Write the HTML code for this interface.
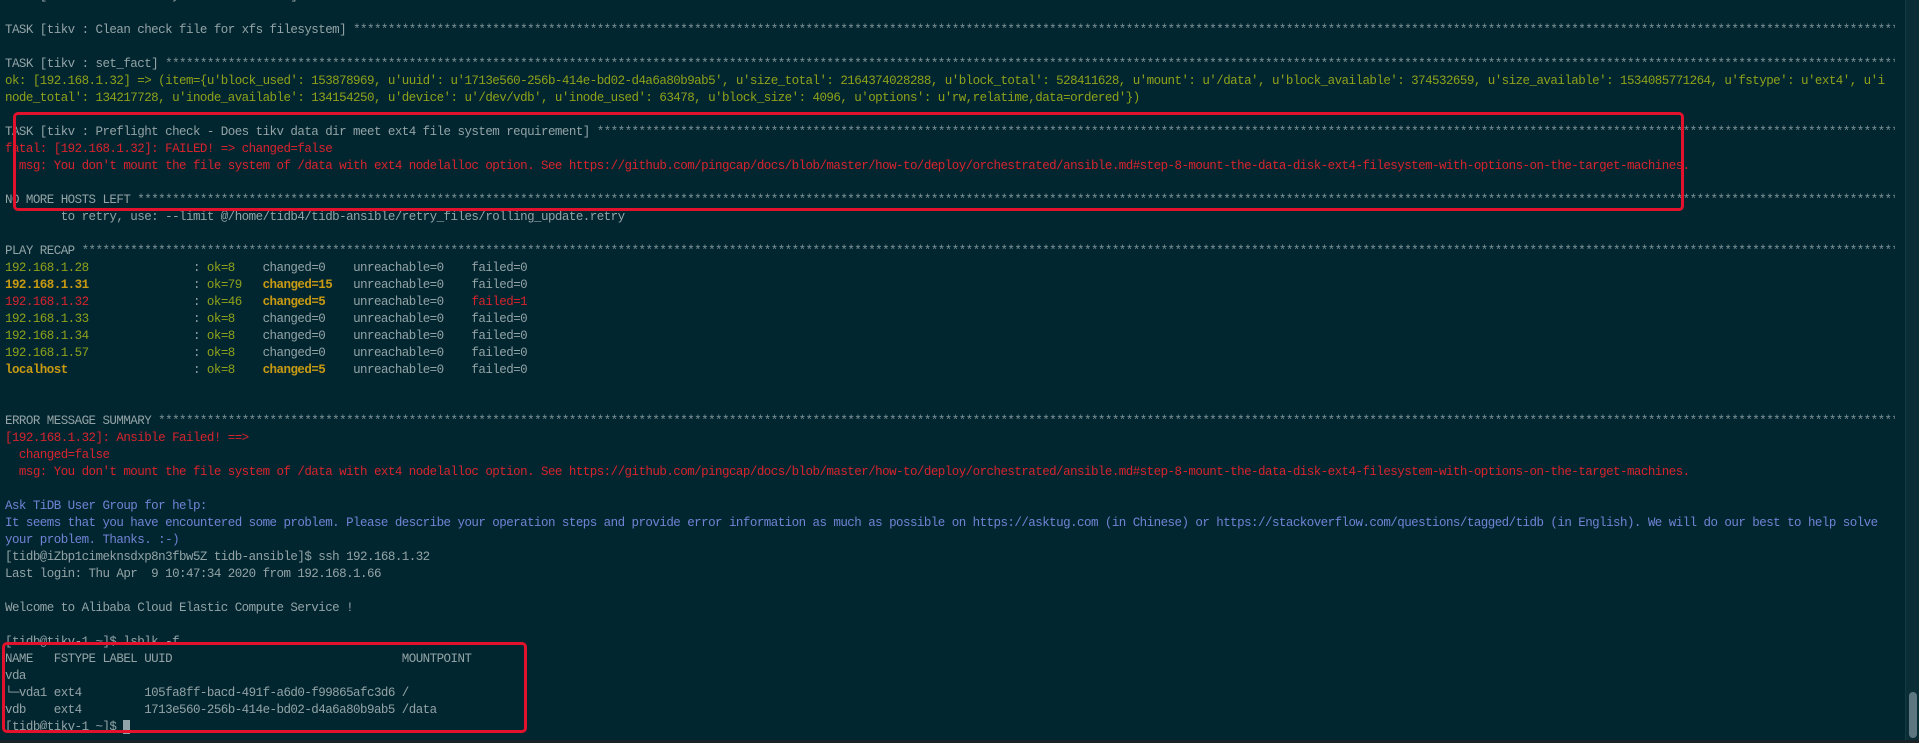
<!DOCTYPE html>
<html><head><meta charset="utf-8"><style>
html,body{margin:0;padding:0;background:#022630;width:1919px;height:743px;overflow:hidden;}
#t{position:absolute;left:5px;top:-12px;width:1890px;overflow:hidden;font-family:"Liberation Mono","DejaVu Sans Mono",monospace;font-size:12.5px;letter-spacing:-0.54px;line-height:17px;color:#93a3a6;}
.l{white-space:pre;height:17px;overflow:hidden;}
.g{color:#8fa11a}.r{color:#d8232d}.y{color:#c89a12;font-weight:bold}.b{color:#7083d4}
.s{color:#7d9296}
.box{position:absolute;border:3px solid #e3122c;border-radius:5px;box-sizing:border-box;}
#sb{position:absolute;left:1905px;top:0;width:14px;height:740px;background:#0b2d36;border-left:1px solid #123a44;}
#th{position:absolute;left:1909px;top:692px;width:8px;height:46px;border-radius:4px;background:#5d7780;}
#bot{position:absolute;left:0;top:740px;width:1919px;height:3px;background:#1a2226;}
.cur{background:#8fa3a8;color:#8fa3a8}
</style></head><body>
<div id="t">
<div class="l">TASK [tikv : Check filesystem of data dir] <span class="s">**************************************************************************************************************************************************</span></div>
<div class="l"> </div>
<div class="l">TASK [tikv : Clean check file for xfs filesystem] <span class="s">**************************************************************************************************************************************************************************************************************************************************************************************</span></div>
<div class="l"> </div>
<div class="l">TASK [tikv : set_fact] <span class="s">****************************************************************************************************************************************************************************************************************************************************************************************************************************</span></div>
<div class="l g">ok: [192.168.1.32] =&gt; (item={u'block_used': 153878969, u'uuid': u'1713e560-256b-414e-bd02-d4a6a80b9ab5', u'size_total': 2164374028288, u'block_total': 528411628, u'mount': u'/data', u'block_available': 374532659, u'size_available': 1534085771264, u'fstype': u'ext4', u'i</div>
<div class="l g">node_total': 134217728, u'inode_available': 134154250, u'device': u'/dev/vdb', u'inode_used': 63478, u'block_size': 4096, u'options': u'rw,relatime,data=ordered'})</div>
<div class="l"> </div>
<div class="l">TASK [tikv : Preflight check - Does tikv data dir meet ext4 file system requirement] <span class="s">****************************************************************************************************************************************************************************************************************************</span></div>
<div class="l r">fatal: [192.168.1.32]: FAILED! =&gt; changed=false</div>
<div class="l r">  msg: You don't mount the file system of /data with ext4 nodelalloc option. See https://github.com/pingcap/docs/blob/master/how-to/deploy/orchestrated/ansible.md#step-8-mount-the-data-disk-ext4-filesystem-with-options-on-the-target-machines.</div>
<div class="l"> </div>
<div class="l">NO MORE HOSTS LEFT <span class="s">********************************************************************************************************************************************************************************************************************************************************************************************************************</span></div>
<div class="l">        to retry, use: --limit @/home/tidb4/tidb-ansible/retry_files/rolling_update.retry</div>
<div class="l"> </div>
<div class="l">PLAY RECAP <span class="s">**************************************************************************************************************************************************************************************************************************************************************************************************************************</span></div>
<div class="l"><span class="g">192.168.1.28</span>               : <span class="g">ok=8   </span> changed=0    unreachable=0    failed=0</div>
<div class="l"><span class="y">192.168.1.31</span>               : <span class="g">ok=79  </span> <span class="y">changed=15</span>   unreachable=0    failed=0</div>
<div class="l"><span class="r">192.168.1.32</span>               : <span class="g">ok=46  </span> <span class="y">changed=5</span>    unreachable=0    <span class="r">failed=1</span></div>
<div class="l"><span class="g">192.168.1.33</span>               : <span class="g">ok=8   </span> changed=0    unreachable=0    failed=0</div>
<div class="l"><span class="g">192.168.1.34</span>               : <span class="g">ok=8   </span> changed=0    unreachable=0    failed=0</div>
<div class="l"><span class="g">192.168.1.57</span>               : <span class="g">ok=8   </span> changed=0    unreachable=0    failed=0</div>
<div class="l"><span class="y">localhost</span>                  : <span class="g">ok=8   </span> <span class="y">changed=5</span>    unreachable=0    failed=0</div>
<div class="l"> </div>
<div class="l"> </div>
<div class="l">ERROR MESSAGE SUMMARY <span class="s">*****************************************************************************************************************************************************************************************************************************************************************************************************************</span></div>
<div class="l r">[192.168.1.32]: Ansible Failed! ==&gt;</div>
<div class="l r">  changed=false</div>
<div class="l r">  msg: You don't mount the file system of /data with ext4 nodelalloc option. See https://github.com/pingcap/docs/blob/master/how-to/deploy/orchestrated/ansible.md#step-8-mount-the-data-disk-ext4-filesystem-with-options-on-the-target-machines.</div>
<div class="l"> </div>
<div class="l b">Ask TiDB User Group for help:</div>
<div class="l b">It seems that you have encountered some problem. Please describe your operation steps and provide error information as much as possible on https://asktug.com (in Chinese) or https://stackoverflow.com/questions/tagged/tidb (in English). We will do our best to help solve</div>
<div class="l b">your problem. Thanks. :-)</div>
<div class="l">[tidb@iZbp1cimeknsdxp8n3fbw5Z tidb-ansible]$ ssh 192.168.1.32</div>
<div class="l">Last login: Thu Apr  9 10:47:34 2020 from 192.168.1.66</div>
<div class="l"> </div>
<div class="l">Welcome to Alibaba Cloud Elastic Compute Service !</div>
<div class="l"> </div>
<div class="l">[tidb@tikv-1 ~]$ lsblk -f</div>
<div class="l">NAME   FSTYPE LABEL UUID                                 MOUNTPOINT</div>
<div class="l">vda</div>
<div class="l">└─vda1 ext4         105fa8ff-bacd-491f-a6d0-f99865afc3d6 /</div>
<div class="l">vdb    ext4         1713e560-256b-414e-bd02-d4a6a80b9ab5 /data</div>
<div class="l">[tidb@tikv-1 ~]$ <span class="cur">_</span></div>
</div>
<div class="box" style="left:13px;top:112px;width:1671px;height:99px"></div>
<div class="box" style="left:2px;top:642px;width:525px;height:91px"></div>
<div id="sb"></div><div id="th"></div><div id="bot"></div>
</body></html>
